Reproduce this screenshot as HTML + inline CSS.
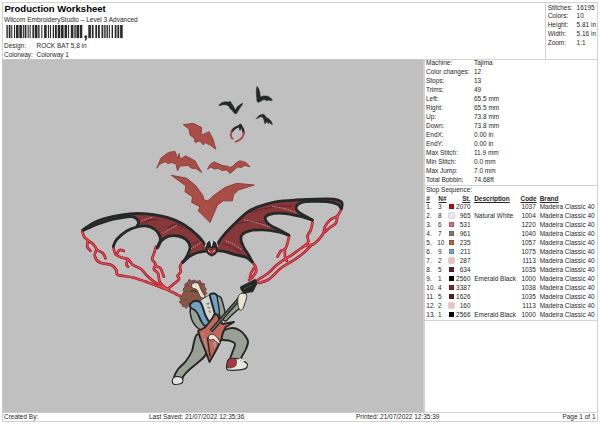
<!DOCTYPE html>
<html><head><meta charset="utf-8"><title>Production Worksheet</title>
<style>
html,body{margin:0;padding:0;background:#fff;}
body{width:600px;height:424px;position:relative;overflow:hidden;font-family:"Liberation Sans",Arial,sans-serif;font-size:6.47px;color:#262626;}
.t{position:absolute;white-space:nowrap;line-height:9px;height:9px;}
.r{text-align:right;}
.h{font-weight:bold;text-decoration:underline;}
.ln{position:absolute;background:#d2d2d2;}
#art{position:absolute;left:3px;top:60px;width:421px;height:352px;}
.sw{position:absolute;width:5px;height:5px;box-shadow:inset 0 0 0 0.5px rgba(0,0,0,.3);}
</style></head><body>

<div class="ln" style="left:2px;top:2px;width:595.5px;height:1px"></div>
<div class="ln" style="left:2px;top:421px;width:595.5px;height:1px"></div>
<div class="ln" style="left:2px;top:2px;width:1px;height:420px"></div>
<div class="ln" style="left:597px;top:2px;width:1px;height:420px"></div>
<div class="ln" style="left:2px;top:59px;width:595.5px;height:1px"></div>
<div class="ln" style="left:545px;top:2px;width:1px;height:57px"></div>
<div class="ln" style="left:424px;top:59px;width:1px;height:353px"></div>
<div class="ln" style="left:424px;top:185px;width:173px;height:1px"></div>
<div class="ln" style="left:424px;top:320px;width:173px;height:1px"></div>
<div class="ln" style="left:2px;top:412px;width:595.5px;height:1px"></div>
<div class="t" style="left:4.5px;top:3.2px;font-size:9.5px;font-weight:bold;line-height:11px;height:11px;color:#000">Production Worksheet</div>
<div class="t" style="left:4px;top:14.5px;font-size:6.53px">Wilcom EmbroideryStudio – Level 3 Advanced</div>
<svg width="130" height="16" viewBox="0 24 130 16" style="position:absolute;left:0;top:24px" fill="#2b2b2b"><rect x="6.40" y="25" width="1.40" height="13.1"/><rect x="8.70" y="25" width="1.80" height="13.1"/><rect x="11.20" y="25" width="1.10" height="13.1"/><rect x="14.00" y="25" width="1.10" height="13.1"/><rect x="16.00" y="25" width="2.60" height="13.1"/><rect x="19.30" y="25" width="2.60" height="13.1"/><rect x="22.80" y="25" width="1.10" height="13.1"/><rect x="24.60" y="25" width="1.80" height="13.1"/><rect x="27.60" y="25" width="1.10" height="13.1"/><rect x="29.60" y="25" width="1.10" height="13.1"/><rect x="32.40" y="25" width="1.80" height="13.1"/><rect x="34.90" y="25" width="2.60" height="13.1"/><rect x="38.20" y="25" width="1.40" height="13.1"/><rect x="41.30" y="25" width="1.10" height="13.1"/><rect x="44.10" y="25" width="2.60" height="13.1"/><rect x="47.90" y="25" width="1.10" height="13.1"/><rect x="49.90" y="25" width="1.10" height="13.1"/><rect x="52.70" y="25" width="1.40" height="13.1"/><rect x="55.00" y="25" width="1.80" height="13.1"/><rect x="57.70" y="25" width="2.60" height="13.1"/><rect x="61.00" y="25" width="2.60" height="13.1"/><rect x="64.50" y="25" width="2.60" height="13.1"/><rect x="68.00" y="25" width="1.10" height="13.1"/><rect x="70.80" y="25" width="2.60" height="13.1"/><rect x="74.30" y="25" width="1.40" height="13.1"/><rect x="76.40" y="25" width="2.60" height="13.1"/><rect x="79.70" y="25" width="2.60" height="13.1"/><rect x="88.30" y="25" width="2.60" height="13.1"/><rect x="91.80" y="25" width="1.80" height="13.1"/><rect x="95.30" y="25" width="1.80" height="13.1"/><rect x="98.00" y="25" width="1.80" height="13.1"/><rect x="101.50" y="25" width="1.80" height="13.1"/><rect x="104.20" y="25" width="1.40" height="13.1"/><rect x="106.50" y="25" width="1.40" height="13.1"/><rect x="108.80" y="25" width="1.10" height="13.1"/><rect x="111.60" y="25" width="1.40" height="13.1"/><rect x="114.70" y="25" width="1.80" height="13.1"/><rect x="117.40" y="25" width="1.80" height="13.1"/><rect x="120.10" y="25" width="2.60" height="13.1"/></svg><div class="t" style="left:83.2px;top:24.3px;font-size:17px;line-height:18px;height:18px;font-weight:bold;color:#222">,</div>
<div class="t" style="left:4px;top:40.5px">Design:</div><div class="t" style="left:36.5px;top:40.5px">ROCK BAT 5,8 in</div>
<div class="t" style="left:4px;top:49.5px">Colorway:</div><div class="t" style="left:36.5px;top:49.5px">Colorway 1</div>
<div class="t" style="left:547.7px;top:2.5px">Stitches:</div><div class="t" style="left:576.6px;top:2.5px">16195</div>
<div class="t" style="left:547.7px;top:11.4px">Colors:</div><div class="t" style="left:576.6px;top:11.4px">10</div>
<div class="t" style="left:547.7px;top:20.3px">Height:</div><div class="t" style="left:576.6px;top:20.3px">5.81 in</div>
<div class="t" style="left:547.7px;top:29.2px">Width:</div><div class="t" style="left:576.6px;top:29.2px">5.16 in</div>
<div class="t" style="left:547.7px;top:38.1px">Zoom:</div><div class="t" style="left:576.6px;top:38.1px">1:1</div>
<div class="t" style="left:426px;top:58.1px">Machine:</div><div class="t" style="left:474px;top:58.1px">Tajima</div>
<div class="t" style="left:426px;top:67.1px">Color changes:</div><div class="t" style="left:474px;top:67.1px">12</div>
<div class="t" style="left:426px;top:76.1px">Stops:</div><div class="t" style="left:474px;top:76.1px">13</div>
<div class="t" style="left:426px;top:85.1px">Trims:</div><div class="t" style="left:474px;top:85.1px">49</div>
<div class="t" style="left:426px;top:94.1px">Left:</div><div class="t" style="left:474px;top:94.1px">65.5 mm</div>
<div class="t" style="left:426px;top:103.1px">Right:</div><div class="t" style="left:474px;top:103.1px">65.5 mm</div>
<div class="t" style="left:426px;top:112.1px">Up:</div><div class="t" style="left:474px;top:112.1px">73.8 mm</div>
<div class="t" style="left:426px;top:121.1px">Down:</div><div class="t" style="left:474px;top:121.1px">73.8 mm</div>
<div class="t" style="left:426px;top:130.1px">EndX:</div><div class="t" style="left:474px;top:130.1px">0.00 in</div>
<div class="t" style="left:426px;top:139.1px">EndY:</div><div class="t" style="left:474px;top:139.1px">0.00 in</div>
<div class="t" style="left:426px;top:148.1px">Max Stitch:</div><div class="t" style="left:474px;top:148.1px">11.9 mm</div>
<div class="t" style="left:426px;top:157.1px">Min Stitch:</div><div class="t" style="left:474px;top:157.1px">0.0 mm</div>
<div class="t" style="left:426px;top:166.1px">Max Jump:</div><div class="t" style="left:474px;top:166.1px">7.0 mm</div>
<div class="t" style="left:426px;top:175.1px">Total Bobbin:</div><div class="t" style="left:474px;top:175.1px">74.68ft</div>
<div class="t" style="left:426px;top:184.8px">Stop Sequence:</div>
<div class="t h" style="left:426.3px;top:194.3px">#</div><div class="t h" style="left:438.3px;top:194.3px">N#</div><div class="t h r" style="left:440px;width:30.5px;top:194.3px">St.</div><div class="t h" style="left:474.2px;top:194.3px">Description</div><div class="t h" style="left:520.5px;top:194.3px">Code</div><div class="t h" style="left:539.7px;top:194.3px">Brand</div>
<div class="t" style="left:426.3px;top:202.1px">1.</div><div class="t" style="left:438.0px;top:202.1px">3</div><div class="sw" style="left:449px;top:204.3px;background:#b01020;"></div><div class="t r" style="left:440px;width:30.5px;top:202.1px">2070</div><div class="t" style="left:474.2px;top:202.1px"></div><div class="t r" style="left:500px;width:35.8px;top:202.1px">1037</div><div class="t" style="left:539.7px;top:202.1px">Madeira Classic 40</div>
<div class="t" style="left:426.3px;top:211.0px">2.</div><div class="t" style="left:438.0px;top:211.0px">8</div><div class="sw" style="left:449px;top:213.2px;background:#e8e8f0;box-shadow:0 0 0 0.4px #999;"></div><div class="t r" style="left:440px;width:30.5px;top:211.0px">965</div><div class="t" style="left:474.2px;top:211.0px">Natural White</div><div class="t r" style="left:500px;width:35.8px;top:211.0px">1004</div><div class="t" style="left:539.7px;top:211.0px">Madeira Classic 40</div>
<div class="t" style="left:426.3px;top:220.0px">3.</div><div class="t" style="left:438.0px;top:220.0px">6</div><div class="sw" style="left:449px;top:222.2px;background:#e06a6a;"></div><div class="t r" style="left:440px;width:30.5px;top:220.0px">531</div><div class="t" style="left:474.2px;top:220.0px"></div><div class="t r" style="left:500px;width:35.8px;top:220.0px">1220</div><div class="t" style="left:539.7px;top:220.0px">Madeira Classic 40</div>
<div class="t" style="left:426.3px;top:228.9px">4.</div><div class="t" style="left:438.0px;top:228.9px">7</div><div class="sw" style="left:449px;top:231.2px;background:#807878;"></div><div class="t r" style="left:440px;width:30.5px;top:228.9px">961</div><div class="t" style="left:474.2px;top:228.9px"></div><div class="t r" style="left:500px;width:35.8px;top:228.9px">1040</div><div class="t" style="left:539.7px;top:228.9px">Madeira Classic 40</div>
<div class="t" style="left:426.3px;top:237.9px">5.</div><div class="t" style="left:437.2px;top:237.9px">10</div><div class="sw" style="left:449px;top:240.1px;background:#a86848;"></div><div class="t r" style="left:440px;width:30.5px;top:237.9px">235</div><div class="t" style="left:474.2px;top:237.9px"></div><div class="t r" style="left:500px;width:35.8px;top:237.9px">1057</div><div class="t" style="left:539.7px;top:237.9px">Madeira Classic 40</div>
<div class="t" style="left:426.3px;top:246.8px">6.</div><div class="t" style="left:438.0px;top:246.8px">9</div><div class="sw" style="left:449px;top:249.1px;background:#78a0cc;"></div><div class="t r" style="left:440px;width:30.5px;top:246.8px">211</div><div class="t" style="left:474.2px;top:246.8px"></div><div class="t r" style="left:500px;width:35.8px;top:246.8px">1075</div><div class="t" style="left:539.7px;top:246.8px">Madeira Classic 40</div>
<div class="t" style="left:426.3px;top:255.8px">7.</div><div class="t" style="left:438.0px;top:255.8px">2</div><div class="sw" style="left:449px;top:258.0px;background:#f0c0c0;box-shadow:0 0 0 0.4px #999;"></div><div class="t r" style="left:440px;width:30.5px;top:255.8px">287</div><div class="t" style="left:474.2px;top:255.8px"></div><div class="t r" style="left:500px;width:35.8px;top:255.8px">1113</div><div class="t" style="left:539.7px;top:255.8px">Madeira Classic 40</div>
<div class="t" style="left:426.3px;top:264.8px">8.</div><div class="t" style="left:438.0px;top:264.8px">5</div><div class="sw" style="left:449px;top:266.9px;background:#5a2030;"></div><div class="t r" style="left:440px;width:30.5px;top:264.8px">634</div><div class="t" style="left:474.2px;top:264.8px"></div><div class="t r" style="left:500px;width:35.8px;top:264.8px">1035</div><div class="t" style="left:539.7px;top:264.8px">Madeira Classic 40</div>
<div class="t" style="left:426.3px;top:273.7px">9.</div><div class="t" style="left:438.0px;top:273.7px">1</div><div class="sw" style="left:449px;top:275.9px;background:#000000;"></div><div class="t r" style="left:440px;width:30.5px;top:273.7px">2560</div><div class="t" style="left:474.2px;top:273.7px">Emerald Black</div><div class="t r" style="left:500px;width:35.8px;top:273.7px">1000</div><div class="t" style="left:539.7px;top:273.7px">Madeira Classic 40</div>
<div class="t" style="left:426.3px;top:282.7px">10.</div><div class="t" style="left:438.0px;top:282.7px">4</div><div class="sw" style="left:449px;top:284.9px;background:#8a2030;"></div><div class="t r" style="left:440px;width:30.5px;top:282.7px">3387</div><div class="t" style="left:474.2px;top:282.7px"></div><div class="t r" style="left:500px;width:35.8px;top:282.7px">1038</div><div class="t" style="left:539.7px;top:282.7px">Madeira Classic 40</div>
<div class="t" style="left:426.3px;top:291.6px">11.</div><div class="t" style="left:438.0px;top:291.6px">5</div><div class="sw" style="left:449px;top:293.8px;background:#5a2030;"></div><div class="t r" style="left:440px;width:30.5px;top:291.6px">1626</div><div class="t" style="left:474.2px;top:291.6px"></div><div class="t r" style="left:500px;width:35.8px;top:291.6px">1035</div><div class="t" style="left:539.7px;top:291.6px">Madeira Classic 40</div>
<div class="t" style="left:426.3px;top:300.6px">12.</div><div class="t" style="left:438.0px;top:300.6px">2</div><div class="sw" style="left:449px;top:302.8px;background:#f0c0c0;box-shadow:0 0 0 0.4px #999;"></div><div class="t r" style="left:440px;width:30.5px;top:300.6px">160</div><div class="t" style="left:474.2px;top:300.6px"></div><div class="t r" style="left:500px;width:35.8px;top:300.6px">1113</div><div class="t" style="left:539.7px;top:300.6px">Madeira Classic 40</div>
<div class="t" style="left:426.3px;top:309.5px">13.</div><div class="t" style="left:438.0px;top:309.5px">1</div><div class="sw" style="left:449px;top:311.7px;background:#000000;"></div><div class="t r" style="left:440px;width:30.5px;top:309.5px">2566</div><div class="t" style="left:474.2px;top:309.5px">Emerald Black</div><div class="t r" style="left:500px;width:35.8px;top:309.5px">1000</div><div class="t" style="left:539.7px;top:309.5px">Madeira Classic 40</div>
<div class="t" style="left:4px;top:412.2px">Created By:</div>
<div class="t" style="left:149px;top:412.2px">Last Saved: 21/07/2022 12:35:36</div>
<div class="t" style="left:356px;top:412.2px">Printed: 21/07/2022 12:35:39</div>
<div class="t r" style="left:500px;width:95.5px;top:412.2px">Page 1 of 1</div>
<div id="art"><svg width="600" height="424" viewBox="0 0 600 424" style="position:absolute;left:-3px;top:-60px;overflow:visible">
<rect x="2.4" y="59.3" width="421.4" height="353.1" fill="#c0c0c0"/>
<path d="M82.2,230.8 C82.6,231.9 83.0,235.4 84.7,237.5 C86.4,239.6 90.3,241.4 92.2,243.3 C94.1,245.2 95.9,247.1 96.3,249.2 C96.7,251.3 94.1,253.6 94.7,255.8 C95.3,258.0 96.9,261.0 99.7,262.5 C102.5,264.0 108.5,263.8 111.3,265.0 C114.1,266.2 115.2,268.3 116.3,270.0 C117.4,271.7 115.2,273.8 118.0,275.0 C120.8,276.2 128.0,276.2 133.0,277.5 C138.0,278.8 143.3,280.8 148.0,282.5 C152.7,284.2 158.0,286.2 161.3,287.5 C164.6,288.8 165.7,289.0 168.0,290.0 C170.3,291.0 172.7,292.3 175.0,293.5 C177.3,294.7 180.8,296.4 182.0,297.0" fill="none" stroke="#a31a2a" stroke-width="2.7" stroke-linecap="round" stroke-linejoin="round"/>
<path d="M88.0,240.5 C87.9,241.5 86.8,245.0 87.2,246.7 C87.6,248.4 90.0,250.1 90.5,250.8" fill="none" stroke="#a31a2a" stroke-width="2.7" stroke-linecap="round" stroke-linejoin="round"/>
<path d="M96.3,249.5 C97.4,250.1 101.5,251.8 103.0,253.3 C104.5,254.8 105.1,257.5 105.5,258.3" fill="none" stroke="#a31a2a" stroke-width="2.7" stroke-linecap="round" stroke-linejoin="round"/>
<path d="M113.5,247.5 C113.8,248.6 114.2,252.5 115.5,254.2 C116.8,255.9 119.2,256.7 121.3,257.5 C123.4,258.3 126.0,257.9 128.0,259.2 C129.9,260.4 130.8,263.3 133.0,265.0 C135.2,266.7 139.1,267.5 141.3,269.2 C143.5,270.9 144.4,273.1 146.3,275.0 C148.2,276.9 150.5,279.0 153.0,280.8 C155.5,282.6 158.8,284.4 161.3,285.8 C163.8,287.2 166.9,288.6 168.0,289.2" fill="none" stroke="#a31a2a" stroke-width="2.7" stroke-linecap="round" stroke-linejoin="round"/>
<path d="M117.0,253.5 C117.5,252.9 118.6,250.4 119.7,250.0 C120.8,249.6 123.1,250.7 123.8,250.8" fill="none" stroke="#a31a2a" stroke-width="2.7" stroke-linecap="round" stroke-linejoin="round"/>
<path d="M128.0,259.5 C127.7,260.3 126.3,263.0 126.3,264.2 C126.3,265.4 127.7,266.3 128.0,266.7" fill="none" stroke="#a31a2a" stroke-width="2.7" stroke-linecap="round" stroke-linejoin="round"/>
<path d="M156.0,246.7 C155.6,247.9 154.4,252.1 153.8,254.2 C153.2,256.3 151.9,257.5 152.2,259.2 C152.5,260.9 155.2,262.5 155.5,264.2 C155.8,265.9 153.4,267.7 153.8,269.2 C154.2,270.7 157.0,271.2 158.0,273.3 C159.0,275.4 158.6,279.3 159.7,281.7 C160.8,284.1 163.9,286.5 164.7,287.5" fill="none" stroke="#a31a2a" stroke-width="2.7" stroke-linecap="round" stroke-linejoin="round"/>
<path d="M155.0,266.0 C155.9,266.4 159.0,266.5 160.5,268.3 C162.0,270.1 163.2,275.3 163.8,276.7" fill="none" stroke="#a31a2a" stroke-width="2.7" stroke-linecap="round" stroke-linejoin="round"/>
<path d="M182.5,261.7 C182.1,262.5 180.3,265.0 180.0,266.7 C179.7,268.4 181.2,270.2 180.8,271.7 C180.4,273.2 177.8,274.6 177.5,275.8 C177.2,277.1 179.9,277.8 179.2,279.2 C178.5,280.6 175.2,282.6 173.3,284.2 C171.4,285.8 168.9,288.2 168.0,289.0" fill="none" stroke="#a31a2a" stroke-width="2.7" stroke-linecap="round" stroke-linejoin="round"/>
<path d="M341.7,208.3 C341.0,209.6 339.4,213.9 337.5,215.8 C335.6,217.8 332.1,218.2 330.0,220.0 C327.9,221.8 326.1,224.5 325.0,226.7 C323.9,228.9 324.4,231.1 323.3,233.3 C322.2,235.5 320.0,238.2 318.3,240.0 C316.6,241.8 315.5,243.2 313.3,244.2 C311.1,245.2 307.2,245.0 305.0,245.8 C302.8,246.6 302.1,247.6 300.0,249.0 C297.9,250.4 295.5,252.4 292.7,254.3 C289.9,256.2 286.2,258.2 283.3,260.2 C280.4,262.2 277.7,264.1 275.3,266.2 C272.9,268.3 271.1,270.7 268.7,272.7 C266.3,274.7 262.6,276.9 260.7,278.2 C258.8,279.5 257.9,279.9 257.3,280.3" fill="none" stroke="#a31a2a" stroke-width="2.7" stroke-linecap="round" stroke-linejoin="round"/>
<path d="M337.5,215.8 C337.2,217.1 337.1,221.4 335.8,223.3 C334.6,225.2 331.8,226.1 330.0,227.5 C328.2,228.9 325.8,231.2 325.0,232.0" fill="none" stroke="#a31a2a" stroke-width="2.7" stroke-linecap="round" stroke-linejoin="round"/>
<path d="M312.5,222.5 C312.2,223.8 311.6,227.8 310.8,230.0 C310.0,232.2 307.9,233.9 307.5,235.8 C307.1,237.8 308.7,240.0 308.3,241.7 C307.9,243.4 305.6,245.1 305.0,245.8" fill="none" stroke="#a31a2a" stroke-width="2.7" stroke-linecap="round" stroke-linejoin="round"/>
<path d="M289.2,235.8 C288.9,237.1 288.2,241.1 287.5,243.3 C286.8,245.5 286.1,247.9 285.0,249.2 C283.9,250.4 282.1,249.6 280.8,250.8 C279.6,252.1 278.1,255.7 277.5,256.7" fill="none" stroke="#a31a2a" stroke-width="2.7" stroke-linecap="round" stroke-linejoin="round"/>
<path d="M285.0,249.2 C285.0,250.4 284.7,254.8 285.0,256.7 C285.3,258.6 286.4,260.1 286.7,260.8" fill="none" stroke="#a31a2a" stroke-width="2.7" stroke-linecap="round" stroke-linejoin="round"/>
<path d="M311.0,245.5 C309.9,246.6 307.1,249.8 304.7,251.9 C302.3,254.0 299.4,256.3 296.7,258.2 C294.0,260.1 291.4,261.5 288.7,263.2 C286.0,264.9 283.1,266.3 280.7,268.2 C278.2,270.1 276.2,272.8 274.0,274.8 C271.8,276.8 269.8,278.9 267.3,280.3 C264.8,281.7 260.4,282.6 259.0,283.0" fill="none" stroke="#a31a2a" stroke-width="2.7" stroke-linecap="round" stroke-linejoin="round"/>
<path d="M251.3,261.0 C252.0,261.9 254.5,264.5 255.3,266.3 C256.1,268.1 256.4,269.9 256.0,271.7 C255.6,273.5 253.9,275.6 252.7,277.0 C251.5,278.4 249.6,279.5 249.0,280.0" fill="none" stroke="#a31a2a" stroke-width="2.7" stroke-linecap="round" stroke-linejoin="round"/>
<path d="M255.0,267.0 C254.4,267.8 252.3,270.3 251.5,272.0 C250.7,273.7 250.2,276.2 250.0,277.0" fill="none" stroke="#a31a2a" stroke-width="2.7" stroke-linecap="round" stroke-linejoin="round"/>
<path d="M82.2,230.8 C82.6,231.9 83.0,235.4 84.7,237.5 C86.4,239.6 90.3,241.4 92.2,243.3 C94.1,245.2 95.9,247.1 96.3,249.2 C96.7,251.3 94.1,253.6 94.7,255.8 C95.3,258.0 96.9,261.0 99.7,262.5 C102.5,264.0 108.5,263.8 111.3,265.0 C114.1,266.2 115.2,268.3 116.3,270.0 C117.4,271.7 115.2,273.8 118.0,275.0 C120.8,276.2 128.0,276.2 133.0,277.5 C138.0,278.8 143.3,280.8 148.0,282.5 C152.7,284.2 158.0,286.2 161.3,287.5 C164.6,288.8 165.7,289.0 168.0,290.0 C170.3,291.0 172.7,292.3 175.0,293.5 C177.3,294.7 180.8,296.4 182.0,297.0" fill="none" stroke="#cf2535" stroke-width="1.6" stroke-linecap="round" stroke-linejoin="round"/>
<path d="M88.0,240.5 C87.9,241.5 86.8,245.0 87.2,246.7 C87.6,248.4 90.0,250.1 90.5,250.8" fill="none" stroke="#cf2535" stroke-width="1.6" stroke-linecap="round" stroke-linejoin="round"/>
<path d="M96.3,249.5 C97.4,250.1 101.5,251.8 103.0,253.3 C104.5,254.8 105.1,257.5 105.5,258.3" fill="none" stroke="#cf2535" stroke-width="1.6" stroke-linecap="round" stroke-linejoin="round"/>
<path d="M113.5,247.5 C113.8,248.6 114.2,252.5 115.5,254.2 C116.8,255.9 119.2,256.7 121.3,257.5 C123.4,258.3 126.0,257.9 128.0,259.2 C129.9,260.4 130.8,263.3 133.0,265.0 C135.2,266.7 139.1,267.5 141.3,269.2 C143.5,270.9 144.4,273.1 146.3,275.0 C148.2,276.9 150.5,279.0 153.0,280.8 C155.5,282.6 158.8,284.4 161.3,285.8 C163.8,287.2 166.9,288.6 168.0,289.2" fill="none" stroke="#cf2535" stroke-width="1.6" stroke-linecap="round" stroke-linejoin="round"/>
<path d="M117.0,253.5 C117.5,252.9 118.6,250.4 119.7,250.0 C120.8,249.6 123.1,250.7 123.8,250.8" fill="none" stroke="#cf2535" stroke-width="1.6" stroke-linecap="round" stroke-linejoin="round"/>
<path d="M128.0,259.5 C127.7,260.3 126.3,263.0 126.3,264.2 C126.3,265.4 127.7,266.3 128.0,266.7" fill="none" stroke="#cf2535" stroke-width="1.6" stroke-linecap="round" stroke-linejoin="round"/>
<path d="M156.0,246.7 C155.6,247.9 154.4,252.1 153.8,254.2 C153.2,256.3 151.9,257.5 152.2,259.2 C152.5,260.9 155.2,262.5 155.5,264.2 C155.8,265.9 153.4,267.7 153.8,269.2 C154.2,270.7 157.0,271.2 158.0,273.3 C159.0,275.4 158.6,279.3 159.7,281.7 C160.8,284.1 163.9,286.5 164.7,287.5" fill="none" stroke="#cf2535" stroke-width="1.6" stroke-linecap="round" stroke-linejoin="round"/>
<path d="M155.0,266.0 C155.9,266.4 159.0,266.5 160.5,268.3 C162.0,270.1 163.2,275.3 163.8,276.7" fill="none" stroke="#cf2535" stroke-width="1.6" stroke-linecap="round" stroke-linejoin="round"/>
<path d="M182.5,261.7 C182.1,262.5 180.3,265.0 180.0,266.7 C179.7,268.4 181.2,270.2 180.8,271.7 C180.4,273.2 177.8,274.6 177.5,275.8 C177.2,277.1 179.9,277.8 179.2,279.2 C178.5,280.6 175.2,282.6 173.3,284.2 C171.4,285.8 168.9,288.2 168.0,289.0" fill="none" stroke="#cf2535" stroke-width="1.6" stroke-linecap="round" stroke-linejoin="round"/>
<path d="M341.7,208.3 C341.0,209.6 339.4,213.9 337.5,215.8 C335.6,217.8 332.1,218.2 330.0,220.0 C327.9,221.8 326.1,224.5 325.0,226.7 C323.9,228.9 324.4,231.1 323.3,233.3 C322.2,235.5 320.0,238.2 318.3,240.0 C316.6,241.8 315.5,243.2 313.3,244.2 C311.1,245.2 307.2,245.0 305.0,245.8 C302.8,246.6 302.1,247.6 300.0,249.0 C297.9,250.4 295.5,252.4 292.7,254.3 C289.9,256.2 286.2,258.2 283.3,260.2 C280.4,262.2 277.7,264.1 275.3,266.2 C272.9,268.3 271.1,270.7 268.7,272.7 C266.3,274.7 262.6,276.9 260.7,278.2 C258.8,279.5 257.9,279.9 257.3,280.3" fill="none" stroke="#cf2535" stroke-width="1.6" stroke-linecap="round" stroke-linejoin="round"/>
<path d="M337.5,215.8 C337.2,217.1 337.1,221.4 335.8,223.3 C334.6,225.2 331.8,226.1 330.0,227.5 C328.2,228.9 325.8,231.2 325.0,232.0" fill="none" stroke="#cf2535" stroke-width="1.6" stroke-linecap="round" stroke-linejoin="round"/>
<path d="M312.5,222.5 C312.2,223.8 311.6,227.8 310.8,230.0 C310.0,232.2 307.9,233.9 307.5,235.8 C307.1,237.8 308.7,240.0 308.3,241.7 C307.9,243.4 305.6,245.1 305.0,245.8" fill="none" stroke="#cf2535" stroke-width="1.6" stroke-linecap="round" stroke-linejoin="round"/>
<path d="M289.2,235.8 C288.9,237.1 288.2,241.1 287.5,243.3 C286.8,245.5 286.1,247.9 285.0,249.2 C283.9,250.4 282.1,249.6 280.8,250.8 C279.6,252.1 278.1,255.7 277.5,256.7" fill="none" stroke="#cf2535" stroke-width="1.6" stroke-linecap="round" stroke-linejoin="round"/>
<path d="M285.0,249.2 C285.0,250.4 284.7,254.8 285.0,256.7 C285.3,258.6 286.4,260.1 286.7,260.8" fill="none" stroke="#cf2535" stroke-width="1.6" stroke-linecap="round" stroke-linejoin="round"/>
<path d="M311.0,245.5 C309.9,246.6 307.1,249.8 304.7,251.9 C302.3,254.0 299.4,256.3 296.7,258.2 C294.0,260.1 291.4,261.5 288.7,263.2 C286.0,264.9 283.1,266.3 280.7,268.2 C278.2,270.1 276.2,272.8 274.0,274.8 C271.8,276.8 269.8,278.9 267.3,280.3 C264.8,281.7 260.4,282.6 259.0,283.0" fill="none" stroke="#cf2535" stroke-width="1.6" stroke-linecap="round" stroke-linejoin="round"/>
<path d="M251.3,261.0 C252.0,261.9 254.5,264.5 255.3,266.3 C256.1,268.1 256.4,269.9 256.0,271.7 C255.6,273.5 253.9,275.6 252.7,277.0 C251.5,278.4 249.6,279.5 249.0,280.0" fill="none" stroke="#cf2535" stroke-width="1.6" stroke-linecap="round" stroke-linejoin="round"/>
<path d="M255.0,267.0 C254.4,267.8 252.3,270.3 251.5,272.0 C250.7,273.7 250.2,276.2 250.0,277.0" fill="none" stroke="#cf2535" stroke-width="1.6" stroke-linecap="round" stroke-linejoin="round"/>
<path d="M82.2,230.8 C82.6,231.9 83.0,235.4 84.7,237.5 C86.4,239.6 90.3,241.4 92.2,243.3 C94.1,245.2 95.9,247.1 96.3,249.2 C96.7,251.3 94.1,253.6 94.7,255.8 C95.3,258.0 96.9,261.0 99.7,262.5 C102.5,264.0 108.5,263.8 111.3,265.0 C114.1,266.2 115.2,268.3 116.3,270.0 C117.4,271.7 115.2,273.8 118.0,275.0 C120.8,276.2 128.0,276.2 133.0,277.5 C138.0,278.8 143.3,280.8 148.0,282.5 C152.7,284.2 158.0,286.2 161.3,287.5 C164.6,288.8 165.7,289.0 168.0,290.0 C170.3,291.0 172.7,292.3 175.0,293.5 C177.3,294.7 180.8,296.4 182.0,297.0" fill="none" stroke="#eab49e" stroke-width="0.5" stroke-linecap="round" stroke-linejoin="round" opacity="0.7"/>
<path d="M88.0,240.5 C87.9,241.5 86.8,245.0 87.2,246.7 C87.6,248.4 90.0,250.1 90.5,250.8" fill="none" stroke="#eab49e" stroke-width="0.5" stroke-linecap="round" stroke-linejoin="round" opacity="0.7"/>
<path d="M96.3,249.5 C97.4,250.1 101.5,251.8 103.0,253.3 C104.5,254.8 105.1,257.5 105.5,258.3" fill="none" stroke="#eab49e" stroke-width="0.5" stroke-linecap="round" stroke-linejoin="round" opacity="0.7"/>
<path d="M113.5,247.5 C113.8,248.6 114.2,252.5 115.5,254.2 C116.8,255.9 119.2,256.7 121.3,257.5 C123.4,258.3 126.0,257.9 128.0,259.2 C129.9,260.4 130.8,263.3 133.0,265.0 C135.2,266.7 139.1,267.5 141.3,269.2 C143.5,270.9 144.4,273.1 146.3,275.0 C148.2,276.9 150.5,279.0 153.0,280.8 C155.5,282.6 158.8,284.4 161.3,285.8 C163.8,287.2 166.9,288.6 168.0,289.2" fill="none" stroke="#eab49e" stroke-width="0.5" stroke-linecap="round" stroke-linejoin="round" opacity="0.7"/>
<path d="M117.0,253.5 C117.5,252.9 118.6,250.4 119.7,250.0 C120.8,249.6 123.1,250.7 123.8,250.8" fill="none" stroke="#eab49e" stroke-width="0.5" stroke-linecap="round" stroke-linejoin="round" opacity="0.7"/>
<path d="M128.0,259.5 C127.7,260.3 126.3,263.0 126.3,264.2 C126.3,265.4 127.7,266.3 128.0,266.7" fill="none" stroke="#eab49e" stroke-width="0.5" stroke-linecap="round" stroke-linejoin="round" opacity="0.7"/>
<path d="M156.0,246.7 C155.6,247.9 154.4,252.1 153.8,254.2 C153.2,256.3 151.9,257.5 152.2,259.2 C152.5,260.9 155.2,262.5 155.5,264.2 C155.8,265.9 153.4,267.7 153.8,269.2 C154.2,270.7 157.0,271.2 158.0,273.3 C159.0,275.4 158.6,279.3 159.7,281.7 C160.8,284.1 163.9,286.5 164.7,287.5" fill="none" stroke="#eab49e" stroke-width="0.5" stroke-linecap="round" stroke-linejoin="round" opacity="0.7"/>
<path d="M155.0,266.0 C155.9,266.4 159.0,266.5 160.5,268.3 C162.0,270.1 163.2,275.3 163.8,276.7" fill="none" stroke="#eab49e" stroke-width="0.5" stroke-linecap="round" stroke-linejoin="round" opacity="0.7"/>
<path d="M182.5,261.7 C182.1,262.5 180.3,265.0 180.0,266.7 C179.7,268.4 181.2,270.2 180.8,271.7 C180.4,273.2 177.8,274.6 177.5,275.8 C177.2,277.1 179.9,277.8 179.2,279.2 C178.5,280.6 175.2,282.6 173.3,284.2 C171.4,285.8 168.9,288.2 168.0,289.0" fill="none" stroke="#eab49e" stroke-width="0.5" stroke-linecap="round" stroke-linejoin="round" opacity="0.7"/>
<path d="M341.7,208.3 C341.0,209.6 339.4,213.9 337.5,215.8 C335.6,217.8 332.1,218.2 330.0,220.0 C327.9,221.8 326.1,224.5 325.0,226.7 C323.9,228.9 324.4,231.1 323.3,233.3 C322.2,235.5 320.0,238.2 318.3,240.0 C316.6,241.8 315.5,243.2 313.3,244.2 C311.1,245.2 307.2,245.0 305.0,245.8 C302.8,246.6 302.1,247.6 300.0,249.0 C297.9,250.4 295.5,252.4 292.7,254.3 C289.9,256.2 286.2,258.2 283.3,260.2 C280.4,262.2 277.7,264.1 275.3,266.2 C272.9,268.3 271.1,270.7 268.7,272.7 C266.3,274.7 262.6,276.9 260.7,278.2 C258.8,279.5 257.9,279.9 257.3,280.3" fill="none" stroke="#eab49e" stroke-width="0.5" stroke-linecap="round" stroke-linejoin="round" opacity="0.7"/>
<path d="M337.5,215.8 C337.2,217.1 337.1,221.4 335.8,223.3 C334.6,225.2 331.8,226.1 330.0,227.5 C328.2,228.9 325.8,231.2 325.0,232.0" fill="none" stroke="#eab49e" stroke-width="0.5" stroke-linecap="round" stroke-linejoin="round" opacity="0.7"/>
<path d="M312.5,222.5 C312.2,223.8 311.6,227.8 310.8,230.0 C310.0,232.2 307.9,233.9 307.5,235.8 C307.1,237.8 308.7,240.0 308.3,241.7 C307.9,243.4 305.6,245.1 305.0,245.8" fill="none" stroke="#eab49e" stroke-width="0.5" stroke-linecap="round" stroke-linejoin="round" opacity="0.7"/>
<path d="M289.2,235.8 C288.9,237.1 288.2,241.1 287.5,243.3 C286.8,245.5 286.1,247.9 285.0,249.2 C283.9,250.4 282.1,249.6 280.8,250.8 C279.6,252.1 278.1,255.7 277.5,256.7" fill="none" stroke="#eab49e" stroke-width="0.5" stroke-linecap="round" stroke-linejoin="round" opacity="0.7"/>
<path d="M285.0,249.2 C285.0,250.4 284.7,254.8 285.0,256.7 C285.3,258.6 286.4,260.1 286.7,260.8" fill="none" stroke="#eab49e" stroke-width="0.5" stroke-linecap="round" stroke-linejoin="round" opacity="0.7"/>
<path d="M311.0,245.5 C309.9,246.6 307.1,249.8 304.7,251.9 C302.3,254.0 299.4,256.3 296.7,258.2 C294.0,260.1 291.4,261.5 288.7,263.2 C286.0,264.9 283.1,266.3 280.7,268.2 C278.2,270.1 276.2,272.8 274.0,274.8 C271.8,276.8 269.8,278.9 267.3,280.3 C264.8,281.7 260.4,282.6 259.0,283.0" fill="none" stroke="#eab49e" stroke-width="0.5" stroke-linecap="round" stroke-linejoin="round" opacity="0.7"/>
<path d="M251.3,261.0 C252.0,261.9 254.5,264.5 255.3,266.3 C256.1,268.1 256.4,269.9 256.0,271.7 C255.6,273.5 253.9,275.6 252.7,277.0 C251.5,278.4 249.6,279.5 249.0,280.0" fill="none" stroke="#eab49e" stroke-width="0.5" stroke-linecap="round" stroke-linejoin="round" opacity="0.7"/>
<path d="M255.0,267.0 C254.4,267.8 252.3,270.3 251.5,272.0 C250.7,273.7 250.2,276.2 250.0,277.0" fill="none" stroke="#eab49e" stroke-width="0.5" stroke-linecap="round" stroke-linejoin="round" opacity="0.7"/>
<path d="M83.0,229.6 C85.3,228.2 91.9,223.5 97.0,221.3 C102.1,219.1 108.0,217.6 113.5,216.3 C119.0,215.1 124.5,214.2 130.0,213.8 C135.5,213.4 141.2,213.4 146.7,213.8 C152.2,214.2 157.5,215.0 163.0,216.4 C168.5,217.8 174.7,219.8 179.5,222.2 C184.3,224.5 188.6,227.9 192.0,230.5 C195.4,233.1 197.9,235.8 200.0,238.0 C202.1,240.2 203.8,243.0 204.5,244.0 C204.8,245.2 205.8,249.8 206.0,251.0 C204.7,251.2 200.7,251.7 198.0,252.5 C195.3,253.3 192.5,254.4 190.0,256.0 C187.5,257.6 184.2,261.2 183.0,262.3 C183.8,261.1 186.3,257.6 187.5,255.0 C188.7,252.4 190.2,249.6 190.0,247.0 C189.8,244.4 188.0,241.3 186.0,239.5 C184.0,237.7 181.0,236.5 178.0,236.0 C175.0,235.5 171.0,235.5 168.0,236.5 C165.0,237.5 161.8,240.1 160.0,242.0 C158.2,243.9 157.8,246.8 157.3,247.8 C157.8,247.0 159.6,244.9 160.0,243.0 C160.4,241.1 160.8,238.8 160.0,236.5 C159.2,234.2 157.2,231.2 155.0,229.5 C152.8,227.8 149.8,226.4 146.7,226.0 C143.6,225.6 138.4,226.8 136.7,227.0 C137.0,226.1 138.7,223.7 138.6,222.3 C138.5,220.9 137.4,219.3 136.0,218.3 C134.6,217.3 133.6,216.4 130.0,216.5 C126.4,216.6 119.8,217.8 114.5,219.0 C109.2,220.2 103.2,222.1 98.0,224.0 C92.8,225.9 85.9,229.2 83.5,230.2 Z" fill="#883739" stroke="none"/>
<path d="M217.5,244.5 C218.1,243.5 218.8,241.3 221.0,238.5 C223.2,235.7 226.5,231.9 230.8,227.6 C235.1,223.3 242.0,216.1 246.8,212.6 C251.6,209.1 254.6,208.1 259.4,206.3 C264.2,204.5 269.6,202.9 275.6,201.8 C281.6,200.8 288.9,200.4 295.6,200.0 C302.3,199.6 309.3,199.2 315.7,199.1 C322.1,198.9 329.6,198.7 333.8,199.1 C338.1,199.5 339.8,200.6 341.2,201.6 C342.6,202.6 342.2,203.8 342.2,205.0 C342.2,206.2 341.4,208.0 341.3,208.6 C340.0,206.9 339.8,205.2 337.5,204.2 C335.2,203.2 330.9,202.2 326.7,201.7 C322.4,201.2 316.1,201.3 312.0,201.4 C307.9,201.5 304.5,201.7 302.0,202.3 C299.5,203.0 297.9,204.1 297.0,205.3 C296.1,206.5 295.7,207.9 296.3,209.3 C296.9,210.7 298.6,212.2 300.5,213.5 C302.4,214.8 305.4,216.1 307.4,217.2 C309.4,218.3 311.5,219.5 312.3,220.0 C310.1,219.3 304.1,217.2 299.2,216.1 C294.3,215.0 287.6,213.6 282.7,213.3 C277.8,213.0 272.7,213.5 269.8,214.3 C266.9,215.1 265.5,216.2 265.3,217.9 C265.1,219.6 266.6,222.3 268.9,224.3 C271.2,226.3 275.7,228.0 279.0,229.8 C282.3,231.6 286.9,234.1 288.5,235.0 C286.6,234.4 281.5,232.6 277.2,231.7 C272.9,230.8 267.1,230.0 262.5,229.8 C257.9,229.7 253.1,230.0 249.7,230.8 C246.3,231.6 243.8,232.9 242.3,234.4 C240.9,235.9 240.8,237.9 241.0,240.0 C241.2,242.1 242.2,244.4 243.3,246.7 C244.4,249.0 246.3,251.2 247.8,253.7 C249.3,256.2 251.5,260.4 252.2,261.8 C251.2,261.1 248.6,258.4 246.0,257.3 C243.4,256.2 240.2,255.9 236.7,255.0 C233.2,254.1 228.3,252.4 225.0,251.7 C221.7,251.0 218.1,251.0 216.7,250.8 C216.8,249.8 217.4,245.6 217.5,244.5 Z" fill="#883739" stroke="none"/>
<path d="M83.0,229.6 C85.3,228.2 91.9,223.5 97.0,221.3 C102.1,219.1 108.0,217.6 113.5,216.3 C119.0,215.1 124.5,214.2 130.0,213.8 C135.5,213.4 141.2,213.4 146.7,213.8 C152.2,214.2 157.5,215.0 163.0,216.4 C168.5,217.8 174.7,219.8 179.5,222.2 C184.3,224.5 188.6,227.9 192.0,230.5 C195.4,233.1 197.9,235.8 200.0,238.0 C202.1,240.2 203.8,243.0 204.5,244.0" fill="none" stroke="#242826" stroke-width="2.8" stroke-linecap="round" stroke-linejoin="round"/>
<path d="M83.5,230.2 C85.9,229.2 92.8,225.9 98.0,224.0 C103.2,222.1 109.2,220.2 114.5,219.0 C119.8,217.8 126.4,216.6 130.0,216.5 C133.6,216.4 134.6,217.3 136.0,218.3 C137.4,219.3 138.5,220.9 138.6,222.3 C138.7,223.7 137.0,226.1 136.7,226.8" fill="none" stroke="#242826" stroke-width="2.8" stroke-linecap="round" stroke-linejoin="round"/>
<path d="M113.3,246.3 C113.9,245.2 114.5,242.1 116.7,239.5 C118.9,236.9 123.4,233.1 126.7,231.0 C130.0,228.9 133.4,227.8 136.7,227.0 C140.0,226.2 143.6,225.6 146.7,226.0 C149.8,226.4 152.8,227.8 155.0,229.5 C157.2,231.2 159.2,234.2 160.0,236.5 C160.8,238.8 160.4,241.1 160.0,243.0 C159.6,244.9 157.8,247.0 157.3,247.8" fill="none" stroke="#242826" stroke-width="2.8" stroke-linecap="round" stroke-linejoin="round"/>
<path d="M157.3,247.8 C157.8,246.8 158.2,243.9 160.0,242.0 C161.8,240.1 165.0,237.5 168.0,236.5 C171.0,235.5 175.0,235.5 178.0,236.0 C181.0,236.5 184.0,237.7 186.0,239.5 C188.0,241.3 189.8,244.4 190.0,247.0 C190.2,249.6 188.7,252.4 187.5,255.0 C186.3,257.6 183.8,261.1 183.0,262.3" fill="none" stroke="#242826" stroke-width="2.8" stroke-linecap="round" stroke-linejoin="round"/>
<path d="M183.0,262.3 C184.2,261.2 187.5,257.6 190.0,256.0 C192.5,254.4 195.3,253.3 198.0,252.5 C200.7,251.7 204.7,251.2 206.0,251.0" fill="none" stroke="#242826" stroke-width="2.8" stroke-linecap="round" stroke-linejoin="round"/>
<path d="M217.5,244.5 C218.1,243.5 218.8,241.3 221.0,238.5 C223.2,235.7 226.5,231.9 230.8,227.6 C235.1,223.3 242.0,216.1 246.8,212.6 C251.6,209.1 254.6,208.1 259.4,206.3 C264.2,204.5 269.6,202.9 275.6,201.8 C281.6,200.8 288.9,200.4 295.6,200.0 C302.3,199.6 309.3,199.2 315.7,199.1 C322.1,198.9 329.6,198.7 333.8,199.1 C338.1,199.5 339.8,200.6 341.2,201.6 C342.6,202.6 342.2,203.8 342.2,205.0 C342.2,206.2 341.4,208.0 341.3,208.6" fill="none" stroke="#242826" stroke-width="2.8" stroke-linecap="round" stroke-linejoin="round"/>
<path d="M340.5,207.5 C340.0,206.9 339.8,205.2 337.5,204.2 C335.2,203.2 330.9,202.2 326.7,201.7 C322.4,201.2 316.1,201.3 312.0,201.4 C307.9,201.5 304.5,201.7 302.0,202.3 C299.5,203.0 297.9,204.1 297.0,205.3 C296.1,206.5 295.7,207.9 296.3,209.3 C296.9,210.7 298.6,212.2 300.5,213.5 C302.4,214.8 305.4,216.1 307.4,217.2 C309.4,218.3 311.5,219.5 312.3,220.0" fill="none" stroke="#242826" stroke-width="2.8" stroke-linecap="round" stroke-linejoin="round"/>
<path d="M312.3,220.0 C310.1,219.3 304.1,217.2 299.2,216.1 C294.3,215.0 287.6,213.6 282.7,213.3 C277.8,213.0 272.7,213.5 269.8,214.3 C266.9,215.1 265.5,216.2 265.3,217.9 C265.1,219.6 266.6,222.3 268.9,224.3 C271.2,226.3 275.7,228.0 279.0,229.8 C282.3,231.6 286.9,234.1 288.5,235.0" fill="none" stroke="#242826" stroke-width="2.8" stroke-linecap="round" stroke-linejoin="round"/>
<path d="M288.5,235.0 C286.6,234.4 281.5,232.6 277.2,231.7 C272.9,230.8 267.1,230.0 262.5,229.8 C257.9,229.7 253.1,230.0 249.7,230.8 C246.3,231.6 243.8,232.9 242.3,234.4 C240.9,235.9 240.8,237.9 241.0,240.0 C241.2,242.1 242.2,244.4 243.3,246.7 C244.4,249.0 246.3,251.2 247.8,253.7 C249.3,256.2 251.5,260.4 252.2,261.8" fill="none" stroke="#242826" stroke-width="2.8" stroke-linecap="round" stroke-linejoin="round"/>
<path d="M252.2,261.8 C251.2,261.1 248.6,258.4 246.0,257.3 C243.4,256.2 240.2,255.9 236.7,255.0 C233.2,254.1 228.3,252.4 225.0,251.7 C221.7,251.0 218.1,251.0 216.7,250.8" fill="none" stroke="#242826" stroke-width="2.8" stroke-linecap="round" stroke-linejoin="round"/>
<path d="M143.0,223.5 C144.2,222.9 147.5,220.7 150.0,220.0 C152.5,219.3 156.7,219.6 158.0,219.5" fill="none" stroke="#5c2338" stroke-width="1.3" opacity="0.75" stroke-linecap="round"/>
<path d="M168.0,228.0 C169.3,227.3 173.5,224.1 176.0,224.0 C178.5,223.9 181.8,226.9 183.0,227.5" fill="none" stroke="#5c2338" stroke-width="1.3" opacity="0.75" stroke-linecap="round"/>
<path d="M192.0,244.0 C193.0,243.6 197.0,241.9 198.0,241.5" fill="none" stroke="#5c2338" stroke-width="1.3" opacity="0.75" stroke-linecap="round"/>
<path d="M250.0,212.5 C253.0,211.8 262.3,209.1 268.0,208.0 C273.7,206.9 280.0,206.3 284.0,206.0 C288.0,205.7 290.7,206.2 292.0,206.3" fill="none" stroke="#5c2338" stroke-width="1.3" opacity="0.75" stroke-linecap="round"/>
<path d="M236.0,224.0 C238.3,223.6 245.3,221.7 250.0,221.5 C254.7,221.3 261.7,222.8 264.0,223.0" fill="none" stroke="#5c2338" stroke-width="1.3" opacity="0.75" stroke-linecap="round"/>
<path d="M223.0,243.5 C224.5,244.1 229.2,245.5 232.0,247.0 C234.8,248.5 238.7,251.6 240.0,252.5" fill="none" stroke="#5c2338" stroke-width="1.3" opacity="0.75" stroke-linecap="round"/>
<path d="M141.5,220.7 C143.4,220.1 150.8,217.6 152.7,217.0" fill="none" stroke="#dcb49c" stroke-width="0.8" stroke-dasharray="1.6 0.7" opacity="0.85"/>
<path d="M163.2,233.5 C164.3,232.8 167.6,230.4 170.0,229.0 C172.4,227.6 176.2,225.8 177.5,225.2" fill="none" stroke="#dcb49c" stroke-width="0.8" stroke-dasharray="1.6 0.7" opacity="0.85"/>
<path d="M191.0,248.5 C192.8,247.5 199.8,243.5 201.5,242.5" fill="none" stroke="#dcb49c" stroke-width="0.8" stroke-dasharray="1.6 0.7" opacity="0.85"/>
<path d="M272.0,206.3 C274.0,206.7 280.0,207.5 284.0,208.5 C288.0,209.5 294.0,211.7 296.0,212.3" fill="none" stroke="#dcb49c" stroke-width="0.8" stroke-dasharray="1.6 0.7" opacity="0.85"/>
<path d="M244.3,219.8 C246.6,220.3 253.6,221.8 258.0,223.0 C262.4,224.2 268.4,226.6 270.5,227.3" fill="none" stroke="#dcb49c" stroke-width="0.8" stroke-dasharray="1.6 0.7" opacity="0.85"/>
<path d="M225.5,240.8 C226.9,241.4 231.2,243.0 234.0,244.5 C236.8,246.0 240.7,248.9 242.0,249.8" fill="none" stroke="#dcb49c" stroke-width="0.8" stroke-dasharray="1.6 0.7" opacity="0.85"/>
<path d="M205.7,246.5 Q206.5,242.5 209.2,240.7 Q210.3,243 210.9,245.4 L211.6,246.9 L212.4,245.4 Q213,243 213.9,240.7 Q216.8,242.5 217.3,246.5 L217.5,249.8 Q217,253 215.6,254.2 L211.8,256.3 L208,254.2 Q206.3,253 205.8,249.8 Z" fill="#242826" stroke="#242826" stroke-width="0.6" stroke-linejoin="round"/>
<path d="M207,248.6 L209.2,247.4 L211.7,248.6 L214.4,247.4 L216.1,248.6 L215.7,252.3 L211.8,254.7 L208,252.3 Z" fill="#8e3438"/>
<path d="M205.3,246.3 Q205.6,242 208.7,240.2 M214.3,240.2 Q217.5,242 217.9,246.5 M211.6,242 L211.6,246" fill="none" stroke="#f4f1f1" stroke-width="0.8" stroke-linecap="round"/>
<path d="M208.5,250.8 l1.7,1.2 M214.6,250.5 l-1.7,1.3" stroke="#f3e6c8" stroke-width="1" stroke-linecap="round"/>
<path d="M171.3,175.3 L186.7,178.3 L195.8,185.8 L202.5,195.0 L204.2,200.0 L207.5,200.8 L210.0,199.2 L213.3,195.8 L225.0,187.5 L236.7,183.3 L254.2,185.0 L238.3,190.0 L233.3,195.0 L232.5,200.8 L223.3,200.8 L217.5,205.0 L210.0,222.5 L198.3,210.8 L200.0,206.7 L191.7,202.5 L192.5,196.7 L185.0,191.7 L185.8,185.8 L176.7,179.2 Z" fill="#a94d47" stroke="#8f3d3a" stroke-width="1" stroke-linejoin="round"/>
<path d="M183.3,124.7 L193.3,123.3 L201.7,127.5 L201.5,131.0 L200.8,135.0 L204.0,134.0 L209.2,131.7 L213.0,139.0 L215.8,149.2 L210.0,145.0 L205.0,142.5 L203.3,145.0 L200.0,141.0 L195.0,142.5 L194.0,138.0 L190.0,135.0 L189.0,129.0 Z" fill="#a94d47" stroke="#8f3d3a" stroke-width="0.9" stroke-linejoin="round"/>
<path d="M156.7,168.3 L161.0,158.0 L168.3,152.5 L175.0,151.3 L176.5,155.0 L178.0,159.0 L179.0,153.5 L180.3,159.0 L185.8,155.8 L195.0,160.8 L201.7,172.5 L196.0,168.5 L191.7,168.3 L188.0,165.5 L183.3,165.8 L180.0,166.0 L177.5,171.0 L176.0,164.0 L171.7,162.5 L168.0,163.5 L165.0,161.7 L160.0,164.0 Z" fill="#a94d47" stroke="#8f3d3a" stroke-width="0.9" stroke-linejoin="round"/>
<path d="M207.5,169.2 L210.0,164.5 L214.2,161.7 L219.0,164.0 L223.3,165.8 L227.0,166.0 L230.0,167.5 L233.0,166.0 L236.0,163.0 L240.0,160.8 L246.0,162.5 L250.0,166.7 L245.0,165.5 L241.0,167.5 L237.5,167.0 L234.0,170.0 L230.0,173.5 L226.5,170.0 L222.0,170.5 L218.5,168.5 L214.5,169.0 L211.0,167.0 Z" fill="#a94d47" stroke="#8f3d3a" stroke-width="0.9" stroke-linejoin="round"/>
<path d="M218.7,105.3 L221.3,102.9 L224.7,101.7 L228.7,102.1 L230.0,101.1 L231.3,102.9 L233.3,106.0 L235.3,110.0 L237.3,106.7 L240.0,104.7 L242.7,103.1 L242.0,105.3 L240.4,107.3 L238.7,110.0 L236.7,113.3 L235.1,114.0 L233.3,112.0 L232.0,110.0 L230.0,108.7 L229.3,106.7 L227.3,105.3 L225.3,104.7 L222.7,104.7 L220.7,105.6 Z" fill="#242826" stroke="#242826" stroke-width="0.5" stroke-linejoin="round"/>
<path d="M256.9,86.4 L258.3,88.0 L259.6,91.3 L260.1,94.7 L260.4,97.1 L263.3,95.9 L267.3,96.1 L270.7,97.9 L272.4,100.3 L270.7,100.7 L268.7,99.9 L266.7,100.8 L264.7,99.6 L262.7,100.1 L260.7,101.3 L258.3,102.4 L256.9,101.3 L256.7,97.3 L256.3,93.3 L256.4,89.3 Z" fill="#242826" stroke="#242826" stroke-width="0.5" stroke-linejoin="round"/>
<path d="M256.0,118.7 L259.3,115.3 L262.7,114.3 L264.7,114.9 L266.0,117.3 L268.7,118.7 L271.3,121.3 L272.4,124.7 L270.7,123.7 L269.3,122.0 L268.7,124.0 L267.3,121.6 L266.0,122.9 L264.9,123.7 L264.0,120.0 L262.7,117.3 L260.7,116.7 L258.0,118.0 Z" fill="#242826" stroke="#242826" stroke-width="0.5" stroke-linejoin="round"/>
<path d="M239.5,126.0 C238.8,126.3 236.3,127.1 235.0,128.0 C233.7,128.9 232.3,130.9 231.8,131.5" fill="none" stroke="#242826" stroke-width="2.3" stroke-linecap="round" stroke-linejoin="round"/>
<path d="M240.8,125.5 C241.1,126.0 242.2,127.5 242.7,128.7 C243.2,129.9 243.5,132.0 243.7,132.7" fill="none" stroke="#242826" stroke-width="2.3" stroke-linecap="round" stroke-linejoin="round"/>
<path d="M231.8,131.5 C231.6,132.0 230.9,133.5 230.8,134.5 C230.8,135.5 231.2,136.8 231.5,137.5 C231.8,138.2 232.5,138.5 232.7,138.7" fill="none" stroke="#b5444a" stroke-width="1.9" stroke-linecap="round" stroke-linejoin="round"/>
<path d="M243.7,132.7 C243.5,133.4 243.4,135.5 242.7,136.7 C242.0,137.9 240.5,139.2 239.3,140.0 C238.1,140.8 236.3,141.4 235.7,141.7" fill="none" stroke="#b5444a" stroke-width="1.9" stroke-linecap="round" stroke-linejoin="round"/>
<path d="M239.0,124.8 L240.6,123.8 L241.6,125.5 L241.0,128.5 L240.0,130.5 L239.0,128.0 Z" fill="#242826" stroke="#242826" stroke-width="0.5" stroke-linejoin="round"/>
<path d="M197.0,334.5 C198.5,333.8 201.4,336.0 203.0,338.0 C204.6,340.0 206.1,343.7 206.5,346.5 C206.9,349.3 206.9,352.3 205.5,355.0 C204.1,357.7 200.8,360.0 198.0,362.5 C195.2,365.0 191.4,367.8 189.0,370.0 C186.6,372.2 184.8,374.2 183.5,376.0 C182.2,377.8 182.6,380.4 181.0,381.0 C179.4,381.6 174.6,381.3 174.0,379.5 C173.4,377.7 175.5,373.1 177.5,370.0 C179.5,366.9 183.6,364.2 186.0,361.0 C188.4,357.8 190.7,354.2 192.0,351.0 C193.3,347.8 193.2,344.8 194.0,342.0 C194.8,339.2 195.5,335.2 197.0,334.5 Z" fill="#99a196" stroke="#242624" stroke-width="1.9" stroke-linejoin="round"/>
<path d="M222.0,333.0 C222.7,331.3 224.2,330.3 226.0,329.5 C227.8,328.7 230.7,327.8 233.0,328.0 C235.3,328.2 238.0,329.2 240.0,330.5 C242.0,331.8 243.7,333.7 245.0,335.5 C246.3,337.3 247.8,339.2 248.0,341.5 C248.2,343.8 247.0,346.6 246.0,349.0 C245.0,351.4 243.1,354.0 242.0,356.0 C240.9,358.0 241.4,360.3 239.5,361.0 C237.6,361.7 231.7,361.5 230.5,360.0 C229.3,358.5 231.8,354.7 232.5,352.0 C233.2,349.3 235.6,345.9 235.0,344.0 C234.4,342.1 231.2,341.2 229.0,340.5 C226.8,339.8 223.2,340.8 222.0,339.5 C220.8,338.2 221.3,334.7 222.0,333.0 Z" fill="#99a196" stroke="#242624" stroke-width="1.9" stroke-linejoin="round"/>
<path d="M172.3,380.5 C172.4,379.3 173.1,377.6 174.5,377.0 C175.9,376.4 179.6,376.6 181.0,377.2 C182.4,377.8 183.0,379.2 183.0,380.3 C183.0,381.4 182.5,383.0 181.0,383.6 C179.5,384.2 175.4,384.7 174.0,384.2 C172.6,383.7 172.2,381.7 172.3,380.5 Z" fill="#e2e2dc" stroke="#242624" stroke-width="1.1" stroke-linejoin="round"/>
<path d="M227.0,364.0 C227.2,362.2 227.3,359.9 229.0,359.0 C230.7,358.1 234.7,358.2 237.0,358.5 C239.3,358.8 241.3,360.2 243.0,361.0 C244.7,361.8 246.3,362.5 247.0,363.5 C247.7,364.5 247.7,366.0 247.0,367.0 C246.3,368.0 246.2,368.8 243.0,369.3 C239.8,369.8 230.7,370.9 228.0,370.0 C225.3,369.1 226.8,365.8 227.0,364.0 Z" fill="#e6e6e0" stroke="#242624" stroke-width="1.2" stroke-linejoin="round"/>
<path d="M227.2,364.0 C227.4,362.5 227.6,360.1 229.0,359.2 C230.4,358.3 234.2,358.2 235.5,358.8 C236.8,359.4 236.6,361.2 236.5,362.5 C236.4,363.8 236.4,365.6 235.0,366.5 C233.6,367.4 229.3,368.4 228.0,368.0 C226.7,367.6 227.0,365.5 227.2,364.0 Z" fill="#a83848" stroke="#242624" stroke-width="0.6" stroke-linejoin="round"/>
<path d="M238,360.8 l2.5,-1.8 l2.2,2.2 l2,-1" stroke="#f6f6f2" stroke-width="1.2" fill="none"/>
<path d="M189.0,279.5 C189.7,279.2 190.8,280.8 191.6,280.8 C192.5,280.9 193.2,279.9 194.0,280.0 C194.8,280.1 195.7,281.2 196.7,281.3 C197.7,281.4 199.2,280.2 200.0,280.5 C200.8,280.8 200.8,282.5 201.5,283.1 C202.3,283.7 204.0,283.3 204.5,284.0 C205.0,284.7 204.1,286.2 204.4,287.0 C204.7,287.8 206.1,288.3 206.3,289.0 C206.5,289.7 205.3,290.6 205.4,291.4 C205.5,292.1 206.8,292.8 206.7,293.5 C206.6,294.2 205.1,294.8 204.8,295.5 C204.5,296.3 205.5,297.4 205.0,298.0 C204.5,298.6 202.4,298.7 201.6,299.3 C200.8,300.0 200.9,301.6 200.0,302.0 C199.1,302.4 197.3,301.5 196.1,301.7 C195.0,302.0 193.8,303.2 193.0,303.5 C192.2,303.8 191.9,303.2 191.2,303.7 C190.5,304.1 189.5,305.6 189.0,306.0 C188.5,306.4 188.4,305.8 187.9,306.2 C187.4,306.6 186.5,308.4 186.0,308.5 C185.5,308.6 185.4,306.9 184.8,306.6 C184.2,306.2 183.0,307.0 182.5,306.5 C182.0,306.0 182.3,304.4 181.8,303.7 C181.3,303.1 179.7,303.2 179.5,302.5 C179.3,301.8 180.6,300.5 180.7,299.7 C180.8,299.0 179.7,298.7 180.0,298.0 C180.3,297.3 181.9,296.4 182.3,295.7 C182.7,295.1 182.2,294.7 182.5,294.0 C182.8,293.3 183.8,292.5 183.8,291.7 C183.9,290.8 182.8,289.8 183.0,289.0 C183.2,288.2 184.6,288.0 184.9,287.1 C185.2,286.3 184.6,284.7 185.0,284.0 C185.4,283.3 186.9,283.5 187.5,282.7 C188.2,282.0 188.3,279.8 189.0,279.5 Z" fill="#875746" stroke="#6e4448" stroke-width="1" stroke-linejoin="round"/>
<path d="M184,292 q2,-2 4,0 M183,299 q2,2 4,0 M187,303 q2,-2 3,1 M186,286 q2,1 3,-1 M200.5,283.5 q2,1 1.5,3" stroke="#6a3f3c" stroke-width="0.8" fill="none"/>
<path d="M200.0,301.5 C200.5,299.5 204.2,298.0 206.0,297.0 C207.8,296.0 209.8,293.8 211.0,295.5 C212.2,297.2 212.7,303.6 213.5,307.0 C214.3,310.4 216.2,313.3 216.0,316.0 C215.8,318.7 213.5,322.7 212.0,323.0 C210.5,323.3 208.5,320.3 207.0,318.0 C205.5,315.7 204.2,311.8 203.0,309.0 C201.8,306.2 199.5,303.5 200.0,301.5 Z" fill="#d4d6d2" stroke="#242624" stroke-width="0.8" stroke-linejoin="round"/>
<path d="M206.5,303 l1.5,1.5 l1,-1.8 M207.5,307.5 l2.5,0.5 M208.8,311.5 l1.8,0.8" stroke="#333" stroke-width="0.8" fill="none"/>
<circle cx="209.6" cy="311.2" r="1" fill="#e07070"/>
<path d="M191.5,284.8 C192.0,283.8 194.8,282.5 196.0,282.5 C197.2,282.5 198.3,283.9 199.0,284.8 C199.7,285.7 199.8,286.8 200.3,288.0 C200.9,289.2 201.6,290.6 202.3,292.0 C203.0,293.4 204.6,295.2 204.7,296.2 C204.8,297.2 203.8,298.0 203.0,298.0 C202.2,298.0 200.8,297.1 200.0,296.2 C199.2,295.2 198.9,293.4 198.3,292.3 C197.7,291.2 197.4,290.0 196.5,289.3 C195.6,288.6 193.8,289.1 193.0,288.3 C192.2,287.6 191.0,285.8 191.5,284.8 Z" fill="#ebe2d2" stroke="#242624" stroke-width="0.7" stroke-linejoin="round"/>
<path d="M190,291 Q193.5,290 197,292" stroke="#222" stroke-width="0.9" fill="none"/>
<path d="M190.0,305.0 C190.2,303.9 191.5,302.7 192.5,302.0 C193.5,301.3 194.7,300.8 196.0,300.8 C197.3,300.9 199.1,301.1 200.3,302.3 C201.5,303.5 202.2,305.9 203.0,308.0 C203.8,310.1 204.2,312.7 205.2,315.0 C206.2,317.3 208.0,320.3 209.0,322.0 C210.0,323.7 211.8,324.6 211.3,325.3 C210.8,326.0 207.6,326.7 206.0,326.3 C204.4,325.9 203.2,324.6 202.0,323.0 C200.8,321.4 200.2,318.6 199.0,316.5 C197.8,314.4 196.3,311.9 195.0,310.5 C193.7,309.1 191.8,309.2 191.0,308.3 C190.2,307.4 189.8,306.1 190.0,305.0 Z" fill="#74a2c6" stroke="#242624" stroke-width="2" stroke-linejoin="round"/>
<path d="M210.0,294.5 C210.7,293.5 213.6,293.3 215.0,293.8 C216.4,294.3 217.4,295.8 218.3,297.5 C219.2,299.2 219.7,301.8 220.2,304.0 C220.7,306.2 221.1,309.1 221.2,311.0 C221.3,312.9 221.5,314.5 221.0,315.5 C220.5,316.5 219.0,317.2 218.0,317.0 C217.0,316.8 215.8,315.7 215.0,314.0 C214.2,312.3 213.7,309.3 213.0,307.0 C212.3,304.7 211.5,302.1 211.0,300.0 C210.5,297.9 209.3,295.5 210.0,294.5 Z" fill="#74a2c6" stroke="#242624" stroke-width="2" stroke-linejoin="round"/>
<path d="M190.3,309.0 C190.6,307.4 192.3,308.8 193.5,309.5 C194.7,310.2 196.3,311.7 197.5,313.5 C198.7,315.3 199.2,318.2 200.5,320.5 C201.8,322.8 203.8,325.4 205.5,327.0 C207.2,328.6 209.8,328.9 211.0,329.8 C212.2,330.7 212.8,331.8 212.5,332.5 C212.2,333.2 210.7,334.2 209.0,334.0 C207.3,333.8 204.7,332.2 202.5,331.0 C200.3,329.8 197.8,328.5 196.0,326.5 C194.2,324.5 192.4,321.9 191.5,319.0 C190.6,316.1 190.0,310.6 190.3,309.0 Z" fill="#99a196" stroke="#242624" stroke-width="1.4" stroke-linejoin="round"/>
<path d="M217.3,297.0 C217.6,295.2 219.8,296.2 220.8,297.5 C221.8,298.8 222.6,302.3 223.3,305.0 C224.0,307.7 225.1,311.2 225.2,313.5 C225.3,315.8 224.9,317.9 224.0,318.5 C223.1,319.1 220.8,318.8 220.0,317.0 C219.2,315.2 219.4,311.3 219.0,308.0 C218.6,304.7 217.0,298.8 217.3,297.0 Z" fill="#99a196" stroke="#242624" stroke-width="1.4" stroke-linejoin="round"/>
<path d="M222.5,317.5 C223.0,315.8 226.8,312.8 229.0,310.5 C231.2,308.2 234.1,305.5 236.0,304.0 C237.9,302.5 239.4,301.3 240.5,301.5 C241.6,301.7 243.0,303.7 242.3,305.3 C241.6,306.9 238.4,309.1 236.3,311.0 C234.2,312.9 231.6,315.3 229.8,317.0 C228.1,318.7 227.0,320.9 225.8,321.0 C224.6,321.1 222.0,319.2 222.5,317.5 Z" fill="#99a196" stroke="#242624" stroke-width="1.4" stroke-linejoin="round"/>
<path d="M198.0,331.0 L205.0,327.5 L212.5,318.0 L214.5,314.3 L217.5,314.5 L219.5,320.0 L222.5,324.0 L234.0,322.0 L225.5,327.3 L222.8,333.0 L221.5,339.0 L217.0,348.5 L209.5,362.0 L205.0,350.0 L200.5,339.0 Z" fill="#c2675c" stroke="#242624" stroke-width="1.9" stroke-linejoin="round"/>
<path d="M207.5,338 L210,356" stroke="#2a2c2a" stroke-width="1.5" fill="none" stroke-linecap="round"/>
<path d="M204,338 L207,349 M213.5,343 l2.5,-0.5 l-1.5,5 z M202,335 l2,-2" stroke="#9fb0b4" stroke-width="0.9" fill="none"/>
<path d="M211,331 L250.5,286" stroke="#242624" stroke-width="4" stroke-linecap="butt"/>
<path d="M211,331 L250.5,286" stroke="#777c78" stroke-width="1.5"/>
<path d="M211,331 L250.5,286" stroke="#2b2d2b" stroke-width="1.5" stroke-dasharray="0.6 1.4"/>
<path d="M240.5,286.8 L255.3,279.3 L257.3,283.0 L252.8,291.8 L244.3,292.8 L241.0,290.0 Z" fill="#242624" stroke="#242624" stroke-width="0.8" stroke-linejoin="round"/>
<path d="M244,289 l8,-4.5" stroke="#8a8e8a" stroke-width="0.8" stroke-dasharray="0.8 1"/>
<path d="M208.5,336.0 C209.0,335.1 211.2,334.2 212.5,334.3 C213.8,334.4 215.3,335.7 216.5,336.8 C217.7,337.9 218.9,339.8 219.5,341.0 C220.1,342.2 220.7,343.6 220.3,343.8 C219.9,344.1 218.1,343.2 217.0,342.5 C215.9,341.8 214.8,339.9 213.5,339.5 C212.2,339.1 210.3,340.6 209.5,340.0 C208.7,339.4 208.0,336.9 208.5,336.0 Z" fill="#ebe2d2" stroke="#242624" stroke-width="0.9" stroke-linejoin="round"/>
<path d="M238.3,296.5 C238.9,294.7 240.2,293.7 241.5,293.3 C242.8,292.9 245.5,293.4 246.3,294.3 C247.1,295.2 246.6,297.4 246.3,299.0 C246.0,300.6 245.1,302.4 244.5,304.0 C243.9,305.6 243.8,307.5 243.0,308.5 C242.2,309.5 240.7,310.8 239.8,310.0 C238.9,309.2 238.1,306.2 237.8,304.0 C237.6,301.8 237.7,298.3 238.3,296.5 Z" fill="#ebe2d2" stroke="#242624" stroke-width="0.9" stroke-linejoin="round"/>
</svg></div>
</body></html>
